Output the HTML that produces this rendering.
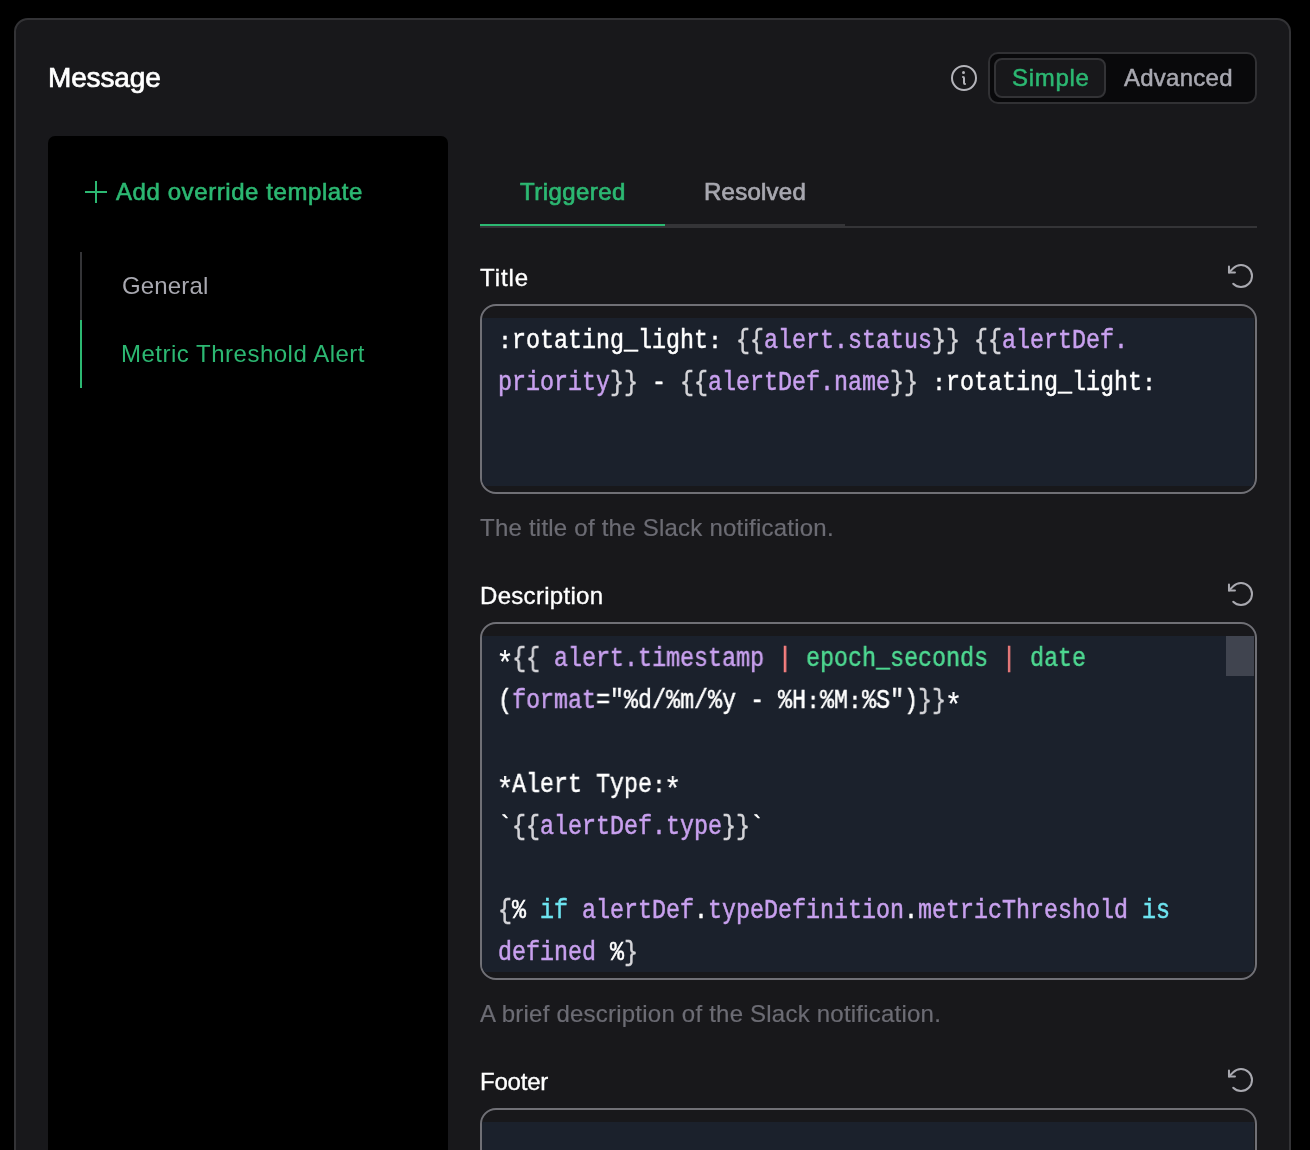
<!DOCTYPE html>
<html lang="en">
<head>
<meta charset="utf-8">
<title>Message template</title>
<style>
  * { box-sizing: border-box; margin: 0; padding: 0; }
  html, body { width: 1310px; height: 1150px; background: #000; overflow: hidden; }
  body { font-family: "Liberation Sans", sans-serif; font-size: 24px; color: #fff; position: relative; }
  .abs { position: absolute; }
  .t { position: absolute; white-space: nowrap; line-height: 1; }

  /* outer card */
  .card { position: absolute; left: 14px; top: 18px; width: 1277px; height: 1200px;
          background: #18181b; border: 2px solid #333336; border-radius: 14px; }

  /* heading */
  .h-message { left: 48px; top: 64px; font-size: 28px; font-weight: 400; color: #fff; -webkit-text-stroke: 0.7px #fff; letter-spacing: -0.15px; }

  /* toggle group */
  .toggle { position: absolute; left: 988px; top: 52px; width: 269px; height: 52px;
            background: #09090b; border: 2px solid #313134; border-radius: 10px; }
  .toggle .simple { position: absolute; left: 994px; top: 58px; }
  .btn-simple { position: absolute; left: 994px; top: 58px; width: 112px; height: 40px;
            background: #18181b; border: 2px solid #333336; border-radius: 8px; }

  /* sidebar */
  .sidebar { position: absolute; left: 48px; top: 136px; width: 400px; height: 1100px;
             background: #000; border-radius: 7px; }
  .rail-gray { position: absolute; left: 80px; top: 252px; width: 2px; height: 68px; background: #343437; }
  .rail-green { position: absolute; left: 80px; top: 320px; width: 2px; height: 68px; background: #2cb872; }

  .green { color: #2cb872; }
  .muted { color: #a8a8b0; }
  .help { color: #6c6c74; -webkit-text-stroke: 0.2px #6c6c74; }

  /* tabs */
  .tabline { position: absolute; left: 480px; top: 226px; width: 777px; height: 2px; background: #343437; }
  .tab-green { position: absolute; left: 480px; top: 224px; width: 185px; height: 2px; background: #2cb872; }
  .tab-gray { position: absolute; left: 665px; top: 224px; width: 180px; height: 2px; background: #343437; }

  /* editors */
  .editor { position: absolute; left: 480px; width: 777px; border: 2px solid #707076; border-radius: 16px;
            background: #18181b; overflow: hidden; padding: 12px 1px 6px 0; }
  .code { background: #1b212c; position: relative; width: 772px; padding-left: 16px; }
  .line { height: 42px; line-height: 46px; white-space: pre;
          font-family: "Liberation Mono", monospace; font-size: 27px; color: #fff; -webkit-text-stroke: 0.5px;
          transform: scaleX(0.8641); transform-origin: 0 0; width: 900px; }
  .s { display: inline-block; transform: translateY(6.5px) scale(1.25); -webkit-text-stroke: 0.15px; }
  .k { display: inline-block; transform-origin: 50% 48.4%; transform: translateY(2px) scaleY(0.8); }
  .b { color: #d4d4d8; }
  .p { color: #c8a0ee; }
  .g { color: #4ed891; }
  .r { color: #f88080; }
  .c { color: #6ee4f0; }
  .thumb { position: absolute; right: 0; top: 0; width: 28px; height: 40px; background: #40444f; }

  svg { position: absolute; overflow: visible; }
</style>
</head>
<body>
<div id="root" style="position:absolute;left:0;top:0;width:1310px;height:1150px;will-change:transform;">
<div class="card"></div>

<span class="t h-message">Message</span>

<!-- info icon -->
<svg style="left:948px;top:62px" width="32" height="32" viewBox="0 0 256 256" fill="none" stroke="#b4b4ba" stroke-width="16" stroke-linecap="round" stroke-linejoin="round">
  <circle cx="128" cy="128" r="96"/>
  <path d="M120,120a8,8,0,0,1,8,8v40a8,8,0,0,0,8,8"/>
  <circle cx="124" cy="84" r="12" fill="#b4b4ba" stroke="none"/>
</svg>

<div class="toggle"></div>
<div class="btn-simple"></div>
<span class="t green" id="t-simple" style="left:1012px;top:66px;letter-spacing:0.7px;-webkit-text-stroke:0.5px #2cb872;">Simple</span>
<span class="t muted" id="t-adv" style="left:1124px;top:66px;letter-spacing:0.25px;-webkit-text-stroke:0.5px #a8a8b0;">Advanced</span>

<div class="sidebar"></div>
<!-- plus icon -->
<svg style="left:80px;top:176px" width="32" height="32" viewBox="0 0 256 256" fill="none" stroke="#2cb872" stroke-width="16" stroke-linecap="butt">
  <line x1="40" y1="128" x2="216" y2="128"/><line x1="128" y1="40" x2="128" y2="216"/>
</svg>
<span class="t green" id="t-add" style="left:116px;top:180px;letter-spacing:0.58px;-webkit-text-stroke:0.6px #2cb872;">Add override template</span>
<div class="rail-gray"></div><div class="rail-green"></div>
<span class="t muted" id="t-general" style="left:122px;top:274px;letter-spacing:0.15px;">General</span>
<span class="t green" id="t-metric" style="left:121px;top:342px;letter-spacing:0.5px;">Metric Threshold Alert</span>

<!-- tabs -->
<span class="t green" id="t-trig" style="left:520px;top:180px;letter-spacing:0.45px;-webkit-text-stroke:0.7px #2cb872;">Triggered</span>
<span class="t muted" id="t-res" style="left:704px;top:180px;letter-spacing:0.25px;-webkit-text-stroke:0.7px #a8a8b0;">Resolved</span>
<div class="tabline"></div><div class="tab-green"></div><div class="tab-gray"></div>

<!-- Title field -->
<span class="t" id="t-title" style="left:480px;top:266px;letter-spacing:0.9px;-webkit-text-stroke:0.35px #fff;">Title</span>
<svg class="reset" style="left:1225px;top:260px" width="32" height="32" viewBox="0 0 256 256" fill="none" stroke="#a9a9b0" stroke-width="16" stroke-linecap="round" stroke-linejoin="round">
  <polyline points="79.8 99.7 31.8 99.7 31.8 51.7"/><path d="M65.8,190.2a88,88,0,1,0,0-124.4L31.8,99.7"/>
</svg>
<div class="editor" style="top:304px;height:190px;">
  <div class="code">
    <div class="line"><span class="k">:</span>rotating_light<span class="k">:</span> <span class="b">{{</span><span class="p">alert.status</span><span class="b">}}</span> <span class="b">{{</span><span class="p">alertDef.</span></div>
    <div class="line"><span class="p">priority</span><span class="b">}}</span> - <span class="b">{{</span><span class="p">alertDef.name</span><span class="b">}}</span> <span class="k">:</span>rotating_light<span class="k">:</span></div>
    <div class="line"> </div>
    <div class="line"> </div>
  </div>
</div>
<span class="t help" id="t-help1" style="left:480px;top:516px;letter-spacing:0.23px;">The title of the Slack notification.</span>

<!-- Description field -->
<span class="t" id="t-desc" style="left:480px;top:584px;letter-spacing:0.3px;-webkit-text-stroke:0.35px #fff;">Description</span>
<svg class="reset" style="left:1225px;top:578px" width="32" height="32" viewBox="0 0 256 256" fill="none" stroke="#a9a9b0" stroke-width="16" stroke-linecap="round" stroke-linejoin="round">
  <polyline points="79.8 99.7 31.8 99.7 31.8 51.7"/><path d="M65.8,190.2a88,88,0,1,0,0-124.4L31.8,99.7"/>
</svg>
<div class="editor" style="top:622px;height:358px;">
  <div class="code">
    <div class="line"><span class="s">*</span><span class="b">{{</span> <span class="p">alert.timestamp</span> <span class="r">|</span> <span class="g">epoch_seconds</span> <span class="r">|</span> <span class="g">date</span></div>
    <div class="line">(<span class="p">format</span>="%d/%m/%y - %H<span class="k">:</span>%M<span class="k">:</span>%S")<span class="b">}}</span><span class="s">*</span></div>
    <div class="line"> </div>
    <div class="line"><span class="s">*</span>Alert Type<span class="k">:</span><span class="s">*</span></div>
    <div class="line">`<span class="b">{{</span><span class="p">alertDef.type</span><span class="b">}}</span>`</div>
    <div class="line"> </div>
    <div class="line"><span class="b">{</span>% <span class="c">if</span> <span class="p">alertDef</span>.<span class="p">typeDefinition</span>.<span class="p">metricThreshold</span> <span class="c">is</span></div>
    <div class="line"><span class="p">defined</span> %<span class="b">}</span></div>
    <div class="thumb"></div>
  </div>
</div>
<span class="t help" id="t-help2" style="left:480px;top:1002px;letter-spacing:0.22px;">A brief description of the Slack notification.</span>

<!-- Footer field -->
<span class="t" id="t-footer" style="left:480px;top:1070px;letter-spacing:-0.2px;-webkit-text-stroke:0.35px #fff;">Footer</span>
<svg class="reset" style="left:1225px;top:1064px" width="32" height="32" viewBox="0 0 256 256" fill="none" stroke="#a9a9b0" stroke-width="16" stroke-linecap="round" stroke-linejoin="round">
  <polyline points="79.8 99.7 31.8 99.7 31.8 51.7"/><path d="M65.8,190.2a88,88,0,1,0,0-124.4L31.8,99.7"/>
</svg>
<div class="editor" style="top:1108px;height:190px;">
  <div class="code">
    <div class="line"> </div><div class="line"> </div><div class="line"> </div><div class="line"> </div>
  </div>
</div>
</div>
</body>
</html>
